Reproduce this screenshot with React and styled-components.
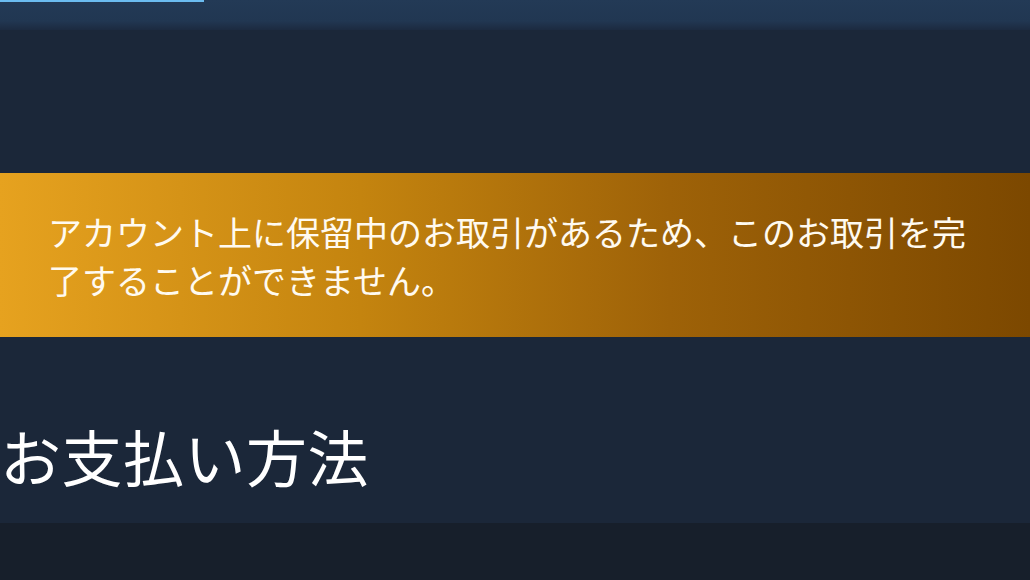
import React from "react";
import styled, { createGlobalStyle } from "styled-components";

const Global = createGlobalStyle`
  html, body { margin: 0; padding: 0; background: #1b2838; }
  body { font-family: "Noto Sans CJK JP", "Noto Sans", sans-serif; }
`;

const Page = styled.div`
  width: 1030px;
  height: 580px;
  display: flex;
  flex-direction: column;
  background: #1b2838;
  overflow: hidden;
`;

const Header = styled.header`
  height: 30px;
  position: relative;
  background: linear-gradient(180deg, #233a56 0%, #213752 70%, #1c2a40 100%);
`;

const Progress = styled.div`
  position: absolute;
  top: 0;
  left: 0;
  height: 2px;
  width: ${(p) => p.pct}%;
  background: #6bbcf0;
`;

const Body = styled.main`
  flex: 1;
  display: flex;
  flex-direction: column;
  padding-top: 143px;
  background: #1b2739;
`;

const Notice = styled.div`
  height: 164px;
  box-sizing: border-box;
  padding: 2px 48px 0;
  display: flex;
  align-items: center;
  background: linear-gradient(90deg, #e6a21f 0%, #c4840f 35%, #9e6208 65%, #7c4800 100%);
  color: #fffaf0;
  font-size: 34px;
  line-height: 48px;
`;

const Title = styled.h1`
  margin: 88px 0 0;
  font-weight: 400;
  font-size: 61px;
  line-height: 61px;
  color: #ffffff;
  letter-spacing: 0.5px;
`;

const Footer = styled.div`
  height: 57px;
  background: #171f2b;
`;

export default function App() {
  return (
    <Page>
      <Global />
      <Header>
        <Progress pct={19.8} />
      </Header>
      <Body>
        <Notice>
          アカウント上に保留中のお取引があるため、このお取引を完了することができません。
        </Notice>
        <Title>お支払い方法</Title>
      </Body>
      <Footer />
    </Page>
  );
}
